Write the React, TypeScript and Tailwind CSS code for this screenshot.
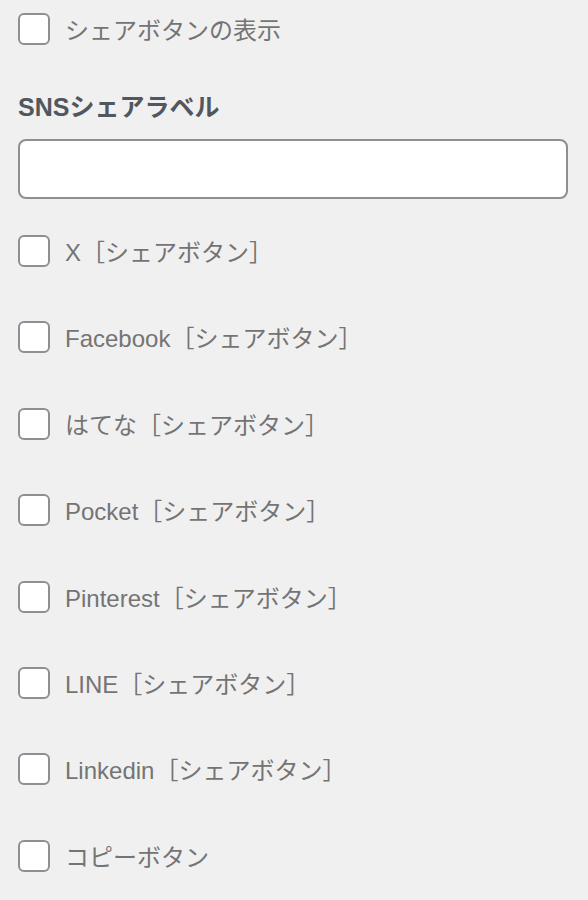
import React from 'react';

const font = { fontFamily: '"Liberation Sans", "Noto Sans CJK JP", sans-serif' };

const Checkbox: React.FC<{ label: string }> = ({ label }) => (
  <label className="flex items-center h-[32px] gap-[15px] cursor-pointer">
    <span className="w-[32px] h-[32px] shrink-0 rounded-[6px] border-2 border-[#8c8f94] bg-white"></span>
    <span className="pt-[4px] text-[24px] leading-[32px] text-[#747474]">{label}</span>
  </label>
);

const App: React.FC = () => {
  const buttons = [
    "X［シェアボタン］",
    "Facebook［シェアボタン］",
    "はてな［シェアボタン］",
    "Pocket［シェアボタン］",
    "Pinterest［シェアボタン］",
    "LINE［シェアボタン］",
    "Linkedin［シェアボタン］",
    "コピーボタン",
  ];

  return (
    <div className="min-h-[900px] bg-[#f0f0f1] pl-[18px] pr-[20px] pt-[13px]" style={font}>
      <Checkbox label="シェアボタンの表示" />

      {/* SNS label */}
      <h3 className="mt-[47px] text-[25px] leading-[30px] font-bold text-[#50575e]">SNSシェアラベル</h3>
      <input
        type="text"
        className="mt-[17px] block w-full h-[60px] rounded-[8px] border-2 border-[#8c8f94] bg-white px-3 text-[24px] outline-none"
      />

      <div className="mt-[36px] flex flex-col gap-[54.4px]">
        {buttons.map((b, i) => (
          <Checkbox key={i} label={b} />
        ))}
      </div>
    </div>
  );
};

export default App;
